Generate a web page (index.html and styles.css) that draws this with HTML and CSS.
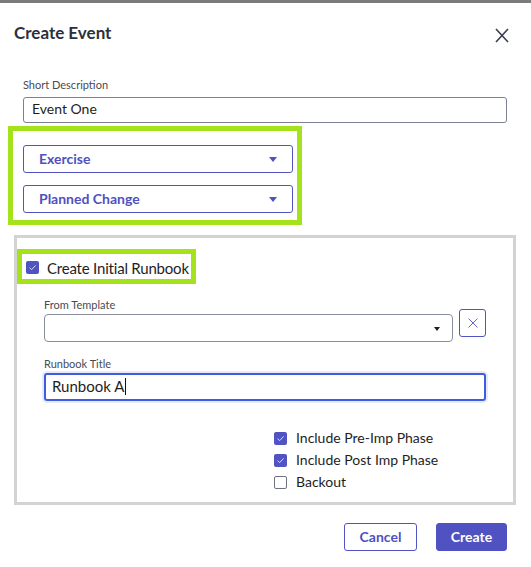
FILE: index.html
```html
<!DOCTYPE html>
<html>
<head>
<meta charset="utf-8">
<link rel="stylesheet" href="styles.css">
</head>
<body>
<div class="dialog">
  <header class="head">
    <h1 class="title">Create Event</h1>
    <svg class="close" width="14" height="15" viewBox="0 0 14 15"><path d="M1 1L13 14M13 1L1 14" stroke="#3a3e4a" stroke-width="1.6" fill="none"/></svg>
  </header>
  <div class="body">
    <div class="lbl">Short Description</div>
    <div class="field">Event One</div>
    <div class="hl hl-selects">
      <div class="sel">Exercise<span class="caret"></span></div>
      <div class="sel">Planned Change<span class="caret"></span></div>
    </div>
    <section class="runbook">
      <div class="hl hl-check">
        <svg class="cb" width="13" height="13" viewBox="0 0 13 13"><rect width="13" height="13" rx="2" fill="#5053c1"/><path d="M3.5 6.6L5.6 8.7L9.6 4.4" stroke="#d9daf6" stroke-width="1" fill="none"/></svg>
        <span class="cb-text">Create Initial Runbook</span>
      </div>
      <div class="sub">
        <div class="lbl lbl-sub">From Template</div>
        <div class="tpl-row">
          <div class="tpl"><span class="caret caret-dark"></span></div>
          <div class="xbtn"><svg width="10" height="10" viewBox="0 0 10 10"><path d="M0.5 0.5L9.5 9.5M9.5 0.5L0.5 9.5" stroke="#6467cc" stroke-width="1" fill="none"/></svg></div>
        </div>
        <div class="lbl lbl-sub lbl-title">Runbook Title</div>
        <div class="focus">Runbook A<span class="cursor"></span></div>
        <div class="checks">
          <div class="chk"><svg class="cb" width="13" height="13" viewBox="0 0 13 13"><rect width="13" height="13" rx="2" fill="#5053c1"/><path d="M3.5 6.6L5.6 8.7L9.6 4.4" stroke="#d9daf6" stroke-width="1" fill="none"/></svg><span>Include Pre-Imp Phase</span></div>
          <div class="chk"><svg class="cb" width="13" height="13" viewBox="0 0 13 13"><rect width="13" height="13" rx="2" fill="#5053c1"/><path d="M3.5 6.6L5.6 8.7L9.6 4.4" stroke="#d9daf6" stroke-width="1" fill="none"/></svg><span>Include Post Imp Phase</span></div>
          <div class="chk"><span class="cb-empty"></span><span>Backout</span></div>
        </div>
      </div>
    </section>
    <footer class="foot">
      <div class="btn btn-cancel">Cancel</div>
      <div class="btn btn-create">Create</div>
    </footer>
  </div>
</div>
</body>
</html>
```

FILE: styles.css
```css
* { box-sizing: border-box; }
html, body { margin: 0; padding: 0; background: #fff; }
body { font-family: Lato, "Noto Sans", sans-serif; color: #222; }

.dialog {
  width: 531px;
  border-top: 3px solid #7b7b7b;
}

.head {
  display: flex;
  justify-content: space-between;
  align-items: flex-start;
  padding: 20px 22px 0 14px;
}
.title {
  margin: 0;
  font-size: 17px;
  line-height: 20px;
  font-weight: 700;
  color: #2c303b;
}
.close { margin-top: 5px; display: block; }

.body { padding: 35px 24px 0 23px; }

.lbl {
  font-size: 11px;
  line-height: 14px;
  color: #484b52;
  margin-bottom: 5px;
}
.field {
  height: 26px;
  border: 1px solid #7c8291;
  border-radius: 3px;
  padding: 0 8px;
  font-size: 14px;
  line-height: 21px;
  color: #1e1e1e;
}

.hl { border: 5px solid #a4e21c; }
.hl-selects {
  margin: 3px 0 0 -15px;
  width: 294px;
  padding: 14px 4px 7px 10px;
  display: flex;
  flex-direction: column;
  gap: 12px;
}
.sel {
  position: relative;
  height: 28px;
  border: 1px solid #5254c2;
  border-radius: 3px;
  padding: 0 15px;
  font-size: 14px;
  font-weight: 700;
  line-height: 25px;
  color: #4e51bf;
}
.caret {
  position: absolute;
  right: 15px;
  top: 11px;
  width: 0; height: 0;
  border-left: 4px solid transparent;
  border-right: 4px solid transparent;
  border-top: 5px solid #4e51bf;
}
.caret-dark {
  border-left-width: 3.5px;
  border-right-width: 3.5px;
  border-top: 4px solid #1e1e1e;
  right: 12px;
  top: 12px;
}

.runbook {
  margin: 10px -9px 0 -9px;
  border: 3px solid #d3d3d3;
  padding: 11px 0 9px 0;
}
.hl-check {
  width: 179px;
  height: 35px;
  display: flex;
  align-items: center;
  padding: 2px 0 0 4px;
  gap: 8px;
  white-space: nowrap;
}
.cb { display: block; flex: none; }
.cb-text { font-size: 15px; line-height: 20px; color: #1e1e1e; letter-spacing: -0.2px; }

.sub { padding: 14px 27px 0 27px; }
.lbl-sub { margin-bottom: 2px; }
.tpl-row { display: flex; align-items: flex-start; gap: 6px; }
.tpl {
  position: relative;
  width: 414px;
  height: 28px;
  border: 1px solid #8a8f9b;
  border-radius: 4px;
}
.xbtn {
  margin-top: -5px;
  width: 27px;
  height: 28px;
  border: 1px solid #5254c2;
  border-radius: 3px;
  display: flex;
  align-items: center;
  justify-content: center;
}
.xbtn svg { display: block; }
.lbl-title { margin-top: 15px; }
.focus {
  width: 442px;
  height: 28px;
  border: 2px solid #3f5ce0;
  border-radius: 3px;
  box-shadow: 0 0 0 2px #e6ebfc;
  padding: 0 6px;
  font-size: 15px;
  line-height: 22px;
  color: #1e1e1e;
  display: flex;
  align-items: flex-start;
}
.cursor {
  display: inline-block;
  width: 1px;
  height: 17px;
  margin-top: 3px;
  margin-left: 1px;
  background: #111;
}

.checks { margin: 26px 0 0 230px; }
.chk {
  display: flex;
  align-items: center;
  gap: 9px;
  height: 22px;
  font-size: 14px;
  line-height: 22px;
  color: #1e1e1e;
}
.cb-empty {
  flex: none;
  width: 13px;
  height: 13px;
  border: 1px solid #70737d;
  border-radius: 2px;
}

.foot {
  display: flex;
  justify-content: flex-end;
  gap: 19px;
  margin-top: 18px;
}
.btn {
  height: 28px;
  border-radius: 3px;
  font-size: 14px;
  font-weight: 700;
  line-height: 25px;
  text-align: center;
}
.btn-cancel {
  width: 73px;
  border: 1px solid #5254c2;
  color: #4e51bf;
}
.btn-create {
  width: 71px;
  border: 1px solid #4f52c0;
  background: #4f52c0;
  color: #fff;
}
```
